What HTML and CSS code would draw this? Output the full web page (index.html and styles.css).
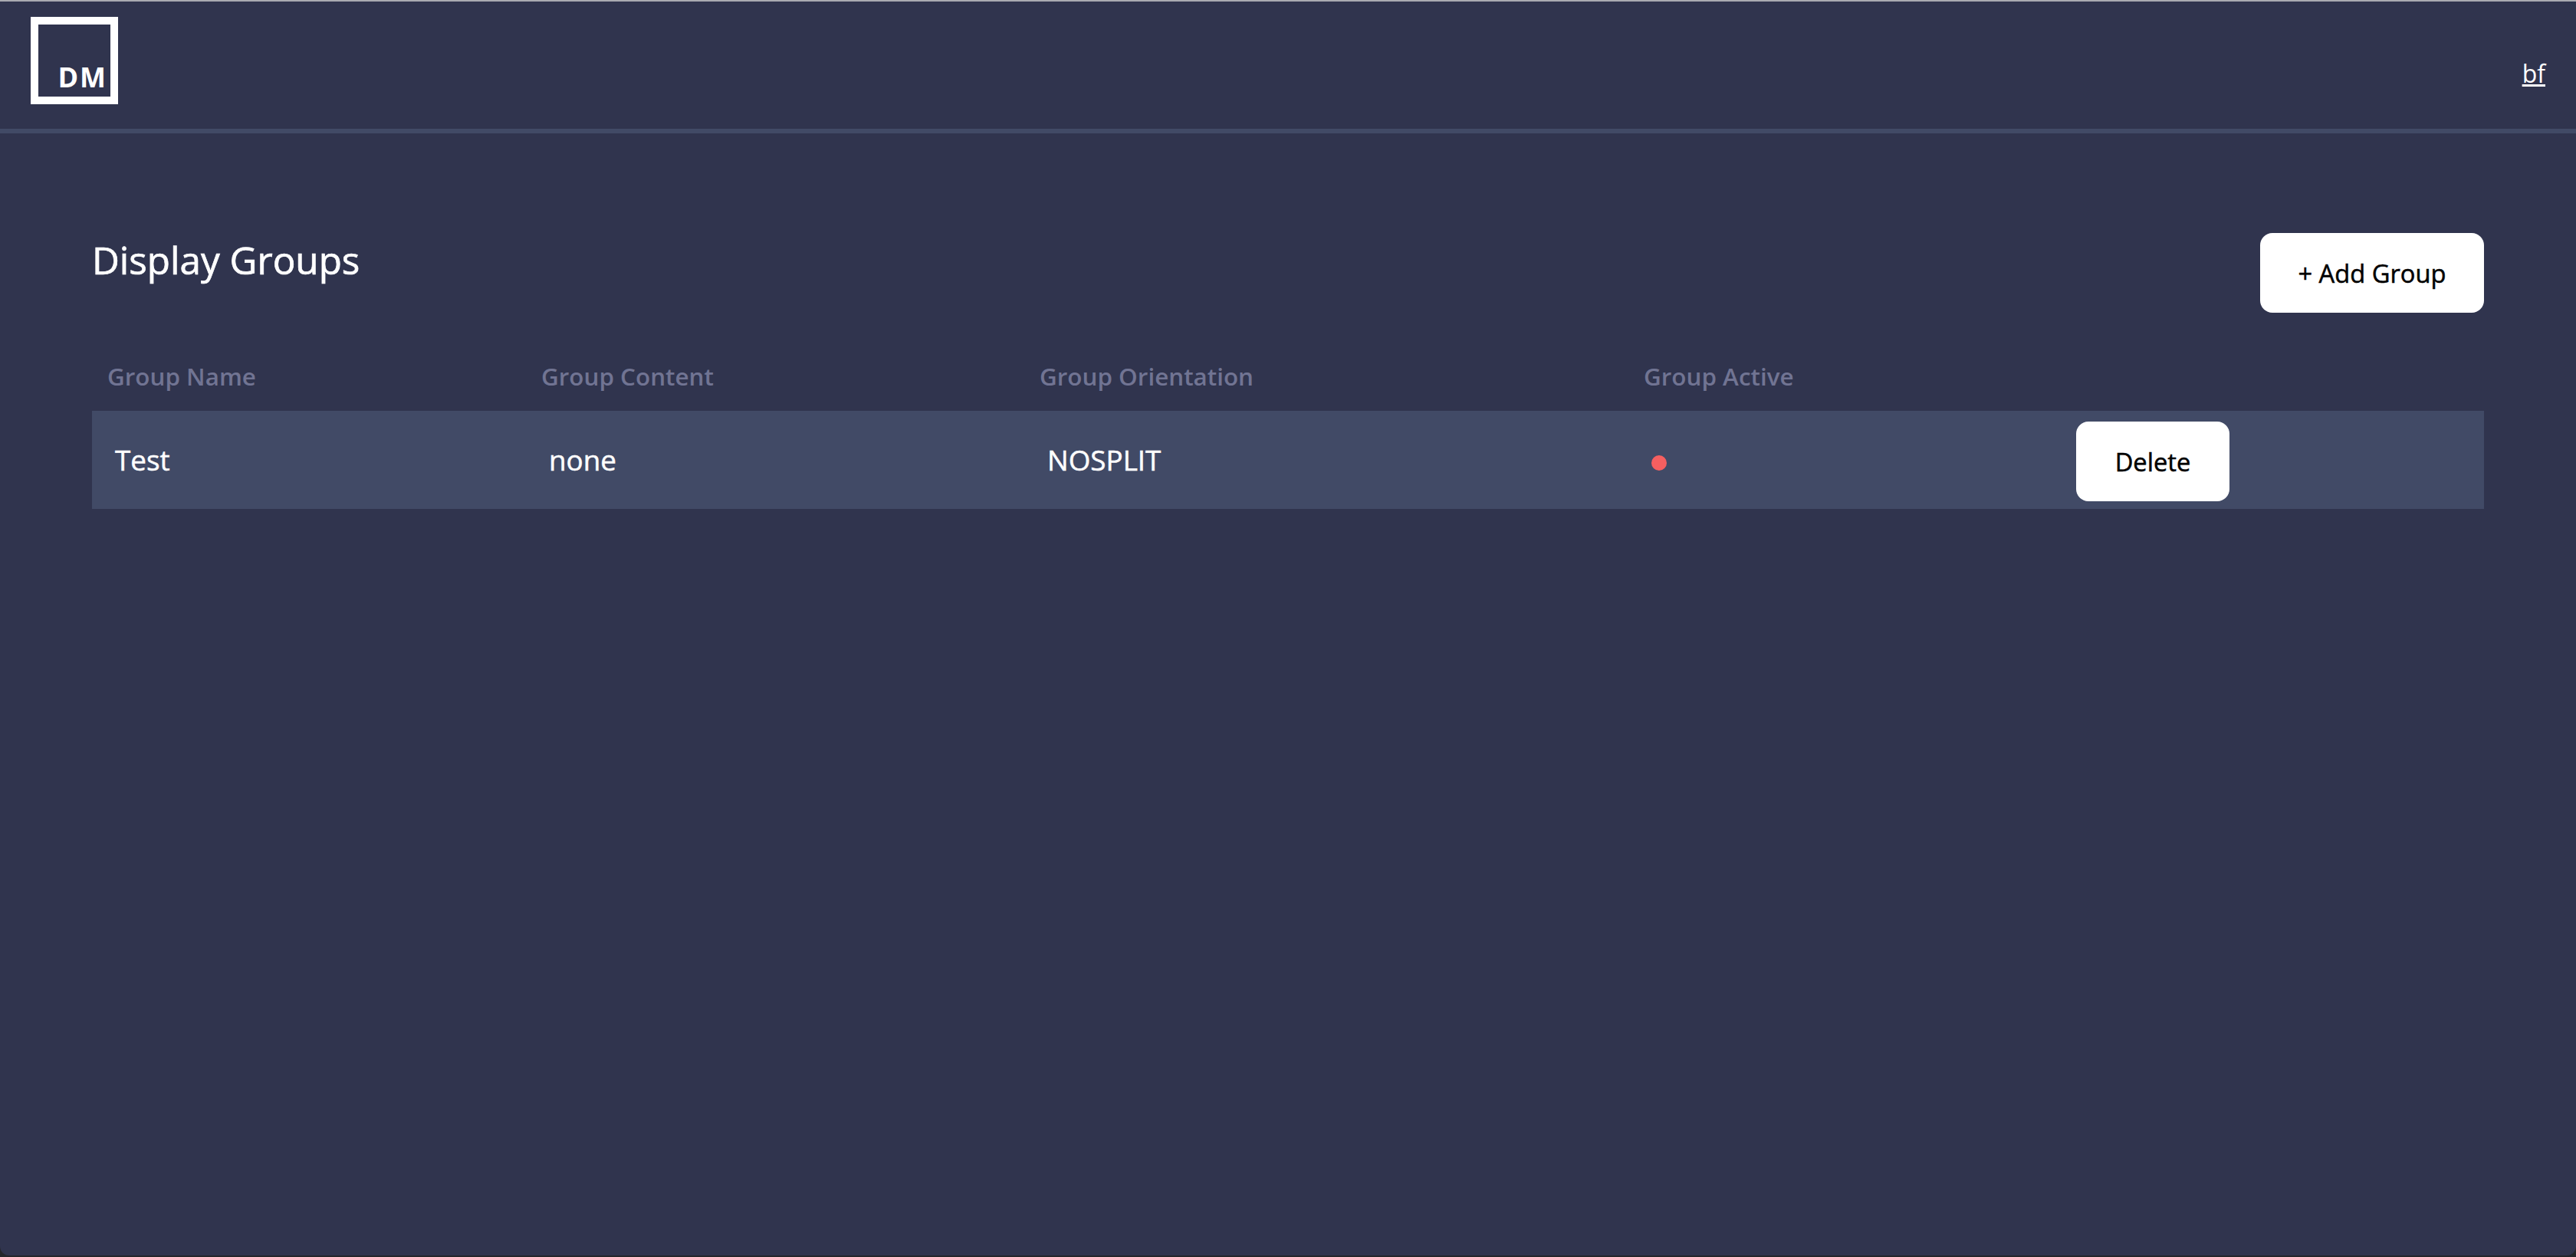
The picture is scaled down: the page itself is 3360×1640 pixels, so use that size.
FILE: index.html
```html
<!DOCTYPE html>
<html lang="en">
<head>
<meta charset="utf-8">
<title>Display Groups</title>
<link rel="stylesheet" href="styles.css">
</head>
<body>
<div class="app">
  <header class="topbar">
    <div class="logo"><span class="logo-text">DM</span></div>
    <a class="user" href="#">bf</a>
  </header>
  <main class="content">
    <div class="title-row">
      <h1 class="title">Display Groups</h1>
      <button class="btn btn-add">+ Add Group</button>
    </div>
    <table class="groups">
      <thead>
        <tr>
          <th class="col-name">Group Name</th>
          <th class="col-content">Group Content</th>
          <th class="col-orient">Group Orientation</th>
          <th class="col-active">Group Active</th>
          <th class="col-action"></th>
        </tr>
      </thead>
      <tbody>
        <tr>
          <td>Test</td>
          <td>none</td>
          <td>NOSPLIT</td>
          <td><span class="dot"></span></td>
          <td class="cell-action"><button class="btn btn-delete">Delete</button></td>
        </tr>
      </tbody>
    </table>
  </main>
</div>
</body>
</html>
```
FILE: styles.css
```css
* { box-sizing: border-box; }
html, body { margin: 0; height: 100%; }
body {
  background: #24262b;
  font-family: "Open Sans", "Noto Sans", sans-serif;
  color: #fff;
}
.app {
  height: 1638px;
  background: #30344e;
  border-top: 2px solid #a9aab0;
  border-radius: 0 0 12px 12px;
  overflow: hidden;
}
.topbar {
  height: 172px;
  border-bottom: 6px solid #414a66;
  padding: 20px 40px;
  display: flex;
  justify-content: space-between;
  align-items: flex-start;
}
.logo {
  width: 114px;
  height: 114px;
  border: 10px solid #fff;
  display: flex;
  align-items: flex-end;
  justify-content: flex-end;
  padding: 0 4px 5px 0;
}
.logo-text {
  font-size: 36px;
  line-height: 40px;
  font-weight: 700;
  letter-spacing: 2px;
}
.user {
  color: #fff;
  font-size: 32px;
  line-height: 40px;
  margin-top: 54px;
}
.content { padding: 130px 120px 0; }
.title-row {
  display: flex;
  justify-content: space-between;
  align-items: flex-start;
  height: 150px;
}
.title {
  margin: 0;
  font-size: 49.4px;
  line-height: 70px;
  font-weight: 500;
  -webkit-text-stroke: 0.7px #fff;
}
.btn {
  background: #fff;
  color: #000;
  border: 0;
  border-radius: 16px;
  height: 104px;
  font-family: inherit;
  font-size: 32.7px;
  font-weight: 500;
  -webkit-text-stroke: 0.5px #000;
  padding: 0;
}
.btn-add { width: 292px; }
.btn-delete { width: 200px; display: block; }
.groups {
  width: 3120px;
  table-layout: fixed;
  border-collapse: collapse;
}
.groups th {
  text-align: left;
  padding: 0 20px 10px;
  height: 82px;
  font-size: 31.4px;
  font-weight: 600;
  color: #717493;
}
.col-name { width: 566px; }
.col-content { width: 650px; }
.col-orient { width: 788px; }
.col-active { width: 564px; }
.col-action { width: 552px; }
.groups td {
  background: #414a66;
  height: 128px;
  padding: 0 30px;
  font-size: 36.8px;
  font-weight: 500;
  -webkit-text-stroke: 0.5px #fff;
}
.groups td.cell-action { padding: 4px 20px 0; }
.dot {
  display: block;
  width: 20px;
  height: 20px;
  border-radius: 50%;
  background: #f55f60;
  margin-top: 8px;
}
```
